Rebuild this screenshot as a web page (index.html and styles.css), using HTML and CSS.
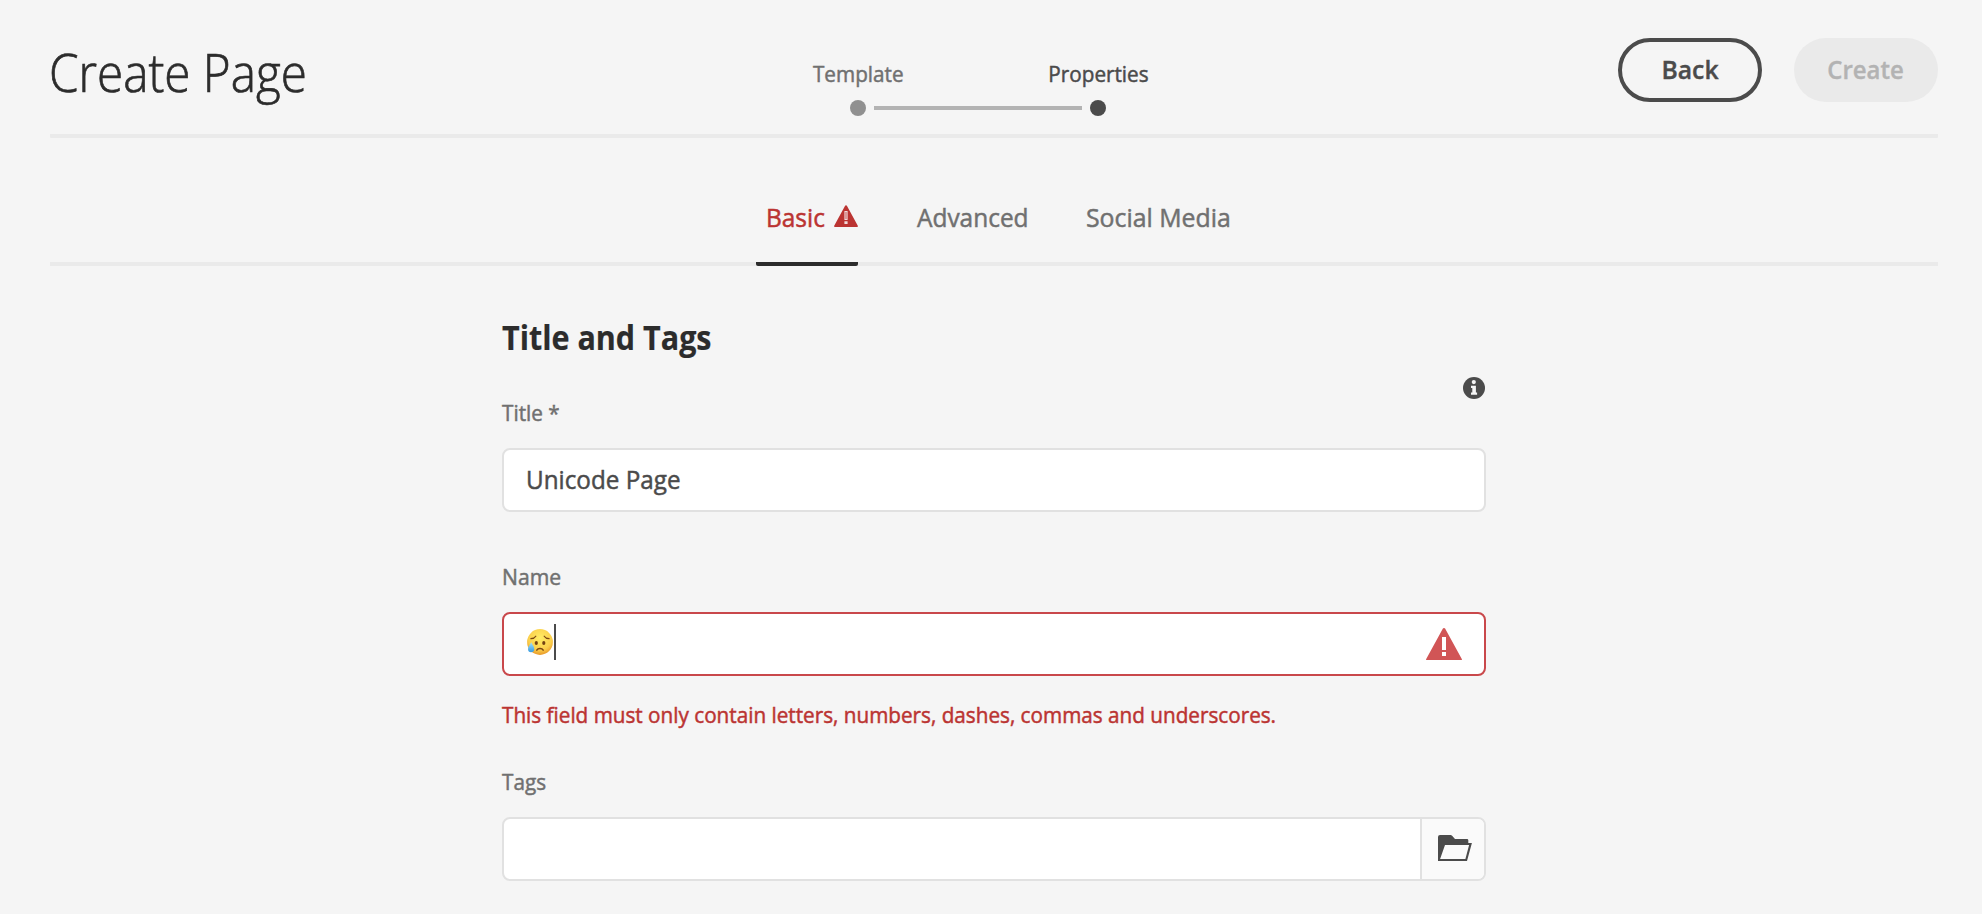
FILE: index.html
```html
<!DOCTYPE html>
<html lang="en">
<head>
<meta charset="utf-8">
<title>Create Page</title>
<link rel="stylesheet" href="styles.css">
</head>
<body>
<header class="header">
  <h1 class="page-title"><span class="condensed">Create Page</span></h1>
  <ol class="steps">
    <li class="step">
      <span class="condensed step-label">Template</span>
      <span class="dot"></span>
    </li>
    <li class="step-line"></li>
    <li class="step current">
      <span class="condensed step-label">Properties</span>
      <span class="dot"></span>
    </li>
  </ol>
  <div class="actions">
    <button class="btn btn-outline" type="button"><span class="back-label">Back</span></button>
    <button class="btn btn-disabled" type="button" disabled><span class="create-label">Create</span></button>
  </div>
</header>
<nav class="tabs">
  <a class="tab tab-basic">
    <span class="tab-label">Basic</span>
    <svg class="tab-alert" width="24" height="22" viewBox="0 0 24 22"><path fill="#bb3432" d="M12 .2c.4 0 .7.2.9.6l10.900 20c.3.600 0 1.200-.700 1.200H.9c-.7 0-1-.6-.7-1.200L11.100.8c.2-.4.500-.6.900-.6z"/><path fill="#f0dada" d="M10.400 6h3.200v9h-3.200zM10.400 16.200h3.200v2.800h-3.200z"/><path fill="#c75b5a" d="M11.500 7h1v7h-1z"/></svg>
  </a>
  <a class="tab tab-advanced"><span class="tab-label">Advanced</span></a>
  <a class="tab tab-social"><span class="tab-label">Social Media</span></a>
</nav>
<main class="form">
  <h2 class="section-title"><span class="condensed">Title and Tags</span></h2>
  <div class="field field-title">
    <label class="label"><span class="condensed">Title *</span></label>
    <svg class="info" width="22" height="22" viewBox="0 0 22 22"><circle cx="11" cy="11" r="11" fill="#4b4b4b"/><circle cx="10.800" cy="5.100" r="2.100" fill="#f5f5f5"/><path fill="#f5f5f5" d="M8 8.800h4.900v6.600h1.200v2.300H8v-2.300h1.300v-4.300H8z"/></svg>
    <div class="input"><span class="value">Unicode Page</span></div>
  </div>
  <div class="field">
    <label class="label"><span class="name-label">Name</span></label>
    <div class="input input-invalid">
      <svg class="emoji" width="26" height="26" viewBox="0 0 26 26">
        <defs>
          <radialGradient id="face" cx=".5" cy=".35" r=".7"><stop offset="0" stop-color="#ffed66"/><stop offset=".65" stop-color="#fbcf4b"/><stop offset="1" stop-color="#e38a1f"/></radialGradient>
          <linearGradient id="tear" x2="0" y2="1"><stop offset="0" stop-color="#a5e2fb"/><stop offset="1" stop-color="#369be0"/></linearGradient>
        </defs>
        <circle cx="13" cy="13" r="12.900" fill="url(#face)"/>
        <g fill="none" stroke="#7b4612" stroke-width="1.200" stroke-linecap="round"><path d="M3.900 9.700c2.400-.1 4-1 4.900-2.500M17.200 7.200c.9 1.500 2.500 2.400 4.900 2.500"/><path d="M9.800 21.200c1.200-2.300 5.200-2.300 6.400 0" stroke-width="1.500"/></g>
        <ellipse cx="9.300" cy="13.900" rx="1.600" ry="2" fill="#744313"/><ellipse cx="16.800" cy="13.900" rx="1.600" ry="2" fill="#744313"/>
        <path fill="url(#tear)" d="M4.200 13.300c.8 2.100 3.100 4.200 3.100 6.600 0 2.100-1.300 3.300-3.200 3.300S1 22 1 19.900c0-2.400 2.400-4.500 3.200-6.600z"/>
      </svg>
      <span class="caret"></span>
      <svg class="field-alert" width="36" height="32" viewBox="0 0 36 32"><path fill="#d15556" d="M18 0c.5 0 .9.2 1.100.600l16.700 30.300c.4.600.1 1.100-.6 1.100H.8c-.7 0-1-.5-.6-1.100L16.900.6c.2-.4.600-.6 1.100-.6z"/><path fill="#fff" d="M16 9h4v13h-4zM16 24h4v4h-4z"/></svg>
    </div>
    <p class="error"><span class="condensed">This field must only contain letters, numbers, dashes, commas and underscores.</span></p>
  </div>
  <div class="field field-tags">
    <label class="label"><span class="condensed">Tags</span></label>
    <div class="input input-group">
      <button class="browse" type="button" aria-label="Browse tags">
        <svg width="34" height="26" viewBox="0 0 34 26"><path fill="#4b4b4b" fill-rule="evenodd" d="M0 2Q0 0 2 0h10.500q1 0 1.600.7L17 4h12q1.300 0 1.300 1.300V8h3.600L29 26H0zM7 10 2.100 24h25.300L31.100 10z"/></svg>
      </button>
    </div>
  </div>
</main>
</body>
</html>
```
FILE: styles.css
```css
* { box-sizing: border-box; }

body {
  margin: 0;
  height: 914px;
  overflow: hidden;
  background: #f5f5f5;
  color: #4b4b4b;
  font-family: "Open Sans", "Noto Sans", sans-serif;
  font-size: 22.5px;
  line-height: 32px;
  padding: 0 44px 0 50px;
}

h1, h2, p, ol { margin: 0; padding: 0; }

/* Narrowed letterforms */
.condensed, .tab-label, .value, .name-label {
  display: inline-block;
  white-space: nowrap;
  transform: scaleX(.92);
  transform-origin: 0 50%;
  -webkit-text-stroke: .5px currentColor;
}
.tab-label { transform: scaleX(.94); }
.value { transform: scaleX(.933); }
.name-label { transform: scaleX(.94); }

.header {
  display: grid;
  grid-template-columns: 700px 1fr 320px;
  height: 138px;
  border-bottom: 4px solid #eaeaea;
  border-radius: 1px;
}

.page-title {
  padding-top: 42px;
  color: #2c2c2c;
  font-size: 53px;
  font-weight: 300;
  line-height: 60px;
}
.page-title .condensed {
  margin-left: -1px;
  transform: scaleX(.898);
  -webkit-text-stroke-width: .7px;
}

.steps {
  display: flex;
  align-items: flex-end;
  list-style: none;
  width: 456px;
  height: 116px;
  padding-left: 48px;
}
.step {
  display: flex;
  flex-direction: column;
  align-items: center;
  gap: 10px;
  width: 120px;
  flex: none;
  color: #707070;
}
.step-label { transform-origin: 50% 50%; }
.step.current { color: #4b4b4b; }
.dot {
  width: 16px;
  height: 16px;
  border-radius: 50%;
  background: #909090;
}
.current .dot { background: #4b4b4b; }
.step-line {
  width: 208px;
  height: 4px;
  flex: none;
  margin: 0 -44px 6px;
  background: #b3b3b3;
}

.actions {
  display: flex;
  gap: 32px;
  padding-top: 38px;
}
.btn {
  width: 144px;
  height: 64px;
  border: 0;
  border-radius: 32px;
  padding: 0 0 2px;
  font: 600 26px/32px "Open Sans", sans-serif;
}
.btn-outline {
  border: 4px solid #4b4b4b;
  background: #f5f5f5;
  color: #4b4b4b;
}
.btn-disabled { background: #eaeaea; color: #b3b3b3; }
.back-label, .create-label {
  display: inline-block;
  transform: scaleX(.95);
  -webkit-text-stroke: .4px currentColor;
}
.create-label { transform: scaleX(.92); }

.tabs {
  display: flex;
  height: 128px;
  padding-left: 706px;
  border-bottom: 4px solid #eaeaea;
  color: #707070;
  font-size: 26px;
  line-height: 32px;
}
.tab {
  display: flex;
  height: 128px;
  padding-top: 63px;
  flex: none;
}
.tab-basic {
  width: 102px;
  padding-left: 10px;
  justify-content: space-between;
  border-bottom: 4px solid #2c2c2c;
  border-radius: 2px;
  color: #bb3432;
}
.tab-alert { margin: 4px 0 0 -20px; }
.tab-advanced { width: 111px; margin-left: 59px; }
.tab-social { margin-left: 58px; }
.tab-social .tab-label { transform: scaleX(.955); }

.form {
  width: 984px;
  margin-left: 452px;
  padding-top: 51px;
}
.section-title {
  height: 40px;
  margin-bottom: 40px;
  color: #2c2c2c;
  font-size: 33.5px;
  font-weight: 700;
  line-height: 40px;
}
.section-title .condensed {
  transform: scaleX(.91);
  -webkit-text-stroke-width: .2px;
}

.field { position: relative; }
.field + .field { margin-top: 49px; }
.field.field-tags { margin-top: 37px; }
.label {
  display: block;
  height: 30px;
  margin-bottom: 21px;
  color: #707070;
}
.info { position: absolute; right: 1px; top: -20px; }

.input {
  display: flex;
  align-items: center;
  height: 64px;
  padding: 0 22px 2px;
  border: 2px solid #e1e1e1;
  border-radius: 8px;
  background: #fff;
  font-size: 26px;
}
.input-invalid { border-color: #c9484b; padding: 0 22px 0 23px; }
.emoji { margin-bottom: 4px; }
.caret {
  width: 2px;
  height: 36px;
  margin: 0 0 4px 1px;
  background: #4b4b4b;
}
.field-alert { margin-left: auto; }

.error {
  height: 30px;
  margin-top: 23px;
  color: #bb3432;
}

.input-group {
  justify-content: flex-end;
  padding: 0;
}
.browse {
  display: flex;
  align-items: center;
  justify-content: center;
  width: 64px;
  height: 60px;
  padding: 0 0 0 4px;
  border: 0;
  border-left: 2px solid #e1e1e1;
  border-radius: 0 6px 6px 0;
  background: #fafafa;
}
.browse svg { margin-bottom: 2px; }
```
